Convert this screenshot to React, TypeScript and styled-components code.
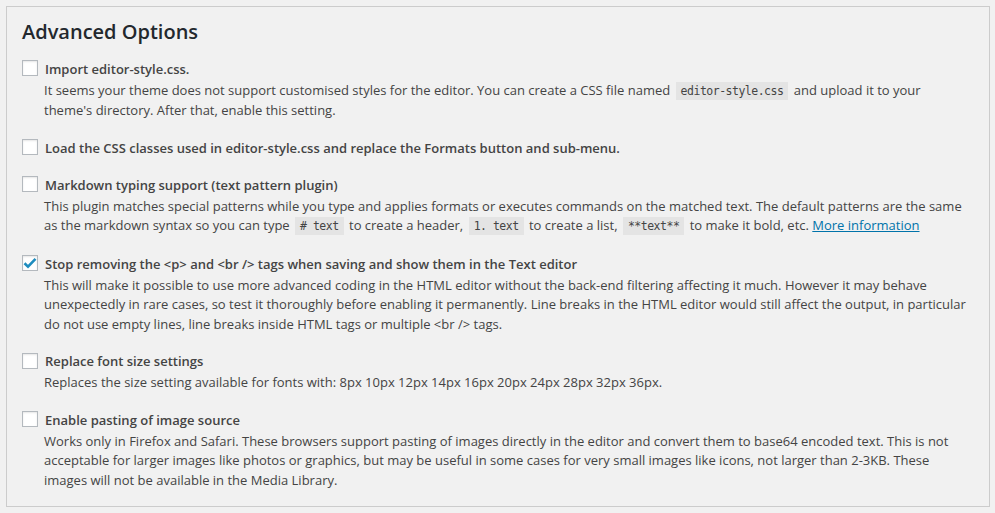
import React from "react";
import styled, { createGlobalStyle } from "styled-components";

const Global = createGlobalStyle`
  html, body { margin: 0; padding: 0; background: #f1f1f1; }
  body { font-family: "Open Sans", "Noto Sans", sans-serif; font-size: 13px; color: #444; }
`;

const Page = styled.div`
  padding: 6px;
  width: 995px;
  height: 513px;
  box-sizing: border-box;
`;

const Panel = styled.section`
  border: 1px solid #ccc;
  background: #f1f1f1;
  width: 984px;
  height: 501px;
  box-sizing: border-box;
  padding: 11px 15px 0 15px;
`;

const Title = styled.h2`
  margin: 0 0 12.5px 0;
  font-size: 20px;
  font-weight: 600;
  line-height: 28px;
  color: #23282d;
`;

const OptionList = styled.div`
  display: flex;
  flex-direction: column;
  gap: 17px;
`;

const Option = styled.div`
  display: flex;
  flex-direction: column;
  gap: 2px;
`;

const LabelRow = styled.label`
  display: flex;
  align-items: center;
  gap: 7px;
  font-weight: 600;
  line-height: 20px;
  color: #444;
`;

const Box = styled.span<{ $checked?: boolean }>`
  width: 16px;
  height: 16px;
  box-sizing: border-box;
  border: 1px solid #b4b9be;
  background: #fff;
  box-shadow: inset 0 1px 2px rgba(0, 0, 0, 0.1);
  display: flex;
  align-items: center;
  justify-content: center;
  flex-shrink: 0;
  margin-top: -1px;
`;

const Desc = styled.p`
  margin: 0;
  padding-left: 22px;
  line-height: 19.5px;
  color: #444;
  max-width: 923px;
`;

const Code = styled.code`
  font-family: "DejaVu Sans Mono", "Liberation Mono", monospace;
  font-size: 11.5px;
  letter-spacing: -0.5px;
  background: #e4e4e4;
  padding: 2px 5px 2px;
  margin: 0 2px;
  color: #444;
`;

const Link = styled.a`
  color: #0073aa;
  text-decoration: underline;
`;

const Check = () => (
  <svg width="14" height="12" viewBox="0 0 14 12">
    <path d="M1.5 6.2 L5 9.6 L12.5 1.8" fill="none" stroke="#1e8cbe" strokeWidth="2.6" strokeLinecap="butt" />
  </svg>
);

const Item: React.FC<{ label: React.ReactNode; checked?: boolean; children?: React.ReactNode }> = ({ label, checked, children }) => (
  <Option>
    <LabelRow>
      <Box $checked={checked}>{checked ? <Check /> : null}</Box>
      <span>{label}</span>
    </LabelRow>
    {children ? <Desc>{children}</Desc> : null}
  </Option>
);

export default function App() {
  return (
    <Page>
      <Global />
      <Panel>
        <Title>Advanced Options</Title>
        <OptionList>
          <Item label="Import editor-style.css.">
            It seems your theme does not support customised styles for the editor. You can create a CSS file named{" "}
            <Code>editor-style.css</Code> and upload it to your theme's directory. After that, enable this setting.
          </Item>
          <Item label="Load the CSS classes used in editor-style.css and replace the Formats button and sub-menu." />
          <Item label="Markdown typing support (text pattern plugin)">
            This plugin matches special patterns while you type and applies formats or executes commands on the matched text. The default patterns are the same as the markdown syntax so you can type{" "}
            <Code># text</Code> to create a header, <Code>1. text</Code> to create a list, <Code>**text**</Code> to make it bold, etc.{" "}
            <Link href="#">More information</Link>
          </Item>
          <Item label="Stop removing the <p> and <br /> tags when saving and show them in the Text editor" checked>
            This will make it possible to use more advanced coding in the HTML editor without the back-end filtering affecting it much. However it may behave unexpectedly in rare cases, so test it thoroughly before enabling it permanently. Line breaks in the HTML editor would still affect the output, in particular do not use empty lines, line breaks inside HTML tags or multiple &lt;br /&gt; tags.
          </Item>
          <Item label="Replace font size settings">
            Replaces the size setting available for fonts with: 8px 10px 12px 14px 16px 20px 24px 28px 32px 36px.
          </Item>
          <Item label="Enable pasting of image source">
            Works only in Firefox and Safari. These browsers support pasting of images directly in the editor and convert them to base64 encoded text. This is not acceptable for larger images like photos or graphics, but may be useful in some cases for very small images like icons, not larger than 2-3KB. These images will not be available in the Media Library.
          </Item>
        </OptionList>
      </Panel>
    </Page>
  );
}
